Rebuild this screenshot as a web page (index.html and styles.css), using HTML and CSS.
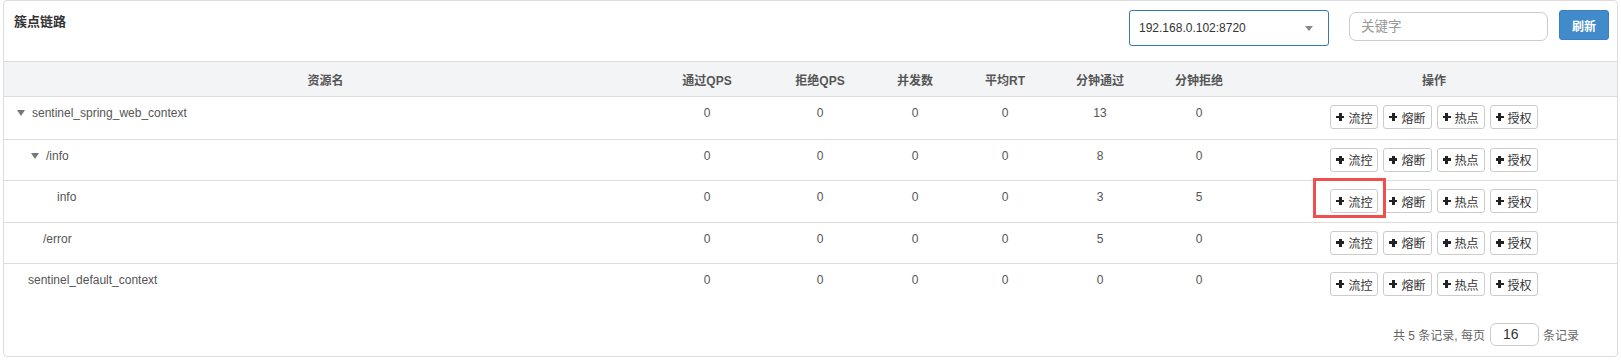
FILE: index.html
```html
<!DOCTYPE html>
<html lang="zh-CN">
<head>
<meta charset="utf-8">
<title>簇点链路</title>
<link rel="stylesheet" href="styles.css">
</head>
<body>
<div class="card">
  <div class="card-head">
    <h3 class="title">簇点链路</h3>
    <div class="tools">
      <div class="select"><span>192.168.0.102:8720</span><i class="caret"></i></div>
      <input class="search" type="text" placeholder="关键字">
      <button class="btn-refresh" type="button">刷新</button>
    </div>
  </div>
  <table class="grid">
    <colgroup>
      <col class="c-name"><col class="c-pass"><col class="c-block"><col class="c-thread"><col class="c-rt"><col class="c-mpass"><col class="c-mblock"><col class="c-ops">
    </colgroup>
    <thead>
      <tr><th>资源名</th><th>通过QPS</th><th>拒绝QPS</th><th>并发数</th><th>平均RT</th><th>分钟通过</th><th>分钟拒绝</th><th>操作</th></tr>
    </thead>
    <tbody>
      <tr>
        <td class="name lvl0"><i class="tri"></i>sentinel_spring_web_context</td>
        <td>0</td><td>0</td><td>0</td><td>0</td><td>13</td><td>0</td>
        <td class="ops"><div class="btns"><button class="btn"><i class="plus"></i>流控</button><button class="btn"><i class="plus"></i>熔断</button><button class="btn"><i class="plus"></i>热点</button><button class="btn"><i class="plus"></i>授权</button></div></td>
      </tr>
      <tr>
        <td class="name lvl1"><i class="tri"></i>/info</td>
        <td>0</td><td>0</td><td>0</td><td>0</td><td>8</td><td>0</td>
        <td class="ops"><div class="btns"><button class="btn"><i class="plus"></i>流控</button><button class="btn"><i class="plus"></i>熔断</button><button class="btn"><i class="plus"></i>热点</button><button class="btn"><i class="plus"></i>授权</button></div></td>
      </tr>
      <tr>
        <td class="name lvl2-leaf">info</td>
        <td>0</td><td>0</td><td>0</td><td>0</td><td>3</td><td>5</td>
        <td class="ops"><div class="btns"><button class="btn"><i class="plus"></i>流控</button><button class="btn"><i class="plus"></i>熔断</button><button class="btn"><i class="plus"></i>热点</button><button class="btn"><i class="plus"></i>授权</button></div></td>
      </tr>
      <tr>
        <td class="name lvl1-leaf">/error</td>
        <td>0</td><td>0</td><td>0</td><td>0</td><td>5</td><td>0</td>
        <td class="ops"><div class="btns"><button class="btn"><i class="plus"></i>流控</button><button class="btn"><i class="plus"></i>熔断</button><button class="btn"><i class="plus"></i>热点</button><button class="btn"><i class="plus"></i>授权</button></div></td>
      </tr>
      <tr>
        <td class="name lvl0-leaf">sentinel_default_context</td>
        <td>0</td><td>0</td><td>0</td><td>0</td><td>0</td><td>0</td>
        <td class="ops"><div class="btns"><button class="btn"><i class="plus"></i>流控</button><button class="btn"><i class="plus"></i>熔断</button><button class="btn"><i class="plus"></i>热点</button><button class="btn"><i class="plus"></i>授权</button></div></td>
      </tr>
    </tbody>
  </table>
  <div class="pager">
    <span>共 5 条记录, 每页</span>
    <input class="page-size" type="text" value="16">
    <span>条记录</span>
  </div>
  <div class="highlight"></div>
</div>
</body>
</html>
```

FILE: styles.css
```css
* { box-sizing: border-box; }
html, body { margin: 0; padding: 0; background: #fff; }
body {
  font-family: "Liberation Sans", Arial, "Noto Sans CJK SC", sans-serif;
  font-size: 12px;
  color: #555;
}
.card {
  position: relative;
  margin: 0 3px;
  height: 357px;
  border: 1px solid #dcdcdc;
  border-radius: 4px;
  background: #fff;
}
.card-head {
  display: flex;
  justify-content: space-between;
  align-items: flex-start;
  height: 60px;
  padding: 9px 8px 0 10px;
}
.title {
  margin: 3px 0 0;
  font-size: 13px;
  line-height: 18px;
  font-weight: bold;
  color: #333;
}
.tools {
  display: flex;
  align-items: flex-start;
}
.select {
  display: flex;
  align-items: center;
  justify-content: space-between;
  width: 200px;
  height: 36px;
  padding: 0 9px 0 9px;
  border: 1px solid #3a77b5;
  border-radius: 3px;
  color: #333;
  font-size: 12px;
}
.caret {
  width: 0;
  height: 0;
  margin-right: 6px;
  border-left: 4px solid transparent;
  border-right: 4px solid transparent;
  border-top: 5px solid #888;
}
.search {
  width: 199px;
  height: 29px;
  margin: 2px 0 0 20px;
  padding: 0 11px;
  border: 1px solid #ccc;
  border-radius: 7px;
  font-family: "Liberation Sans", Arial, "Noto Sans CJK SC", sans-serif;
  font-size: 13.5px;
  color: #333;
  outline: none;
}
.search::placeholder { color: #999; }
.btn-refresh {
  width: 50px;
  height: 30px;
  margin-left: 11px;
  padding: 0;
  border: 1px solid #3a80c2;
  border-radius: 3px;
  background: #428bca;
  color: #fff;
  font-family: "Liberation Sans", Arial, "Noto Sans CJK SC", sans-serif;
  font-size: 12px;
  font-weight: bold;
}
.grid {
  width: 100%;
  border-collapse: separate;
  border-spacing: 0;
  table-layout: fixed;
}
.c-name { width: 643px; }
.c-pass { width: 120px; }
.c-block { width: 106px; }
.c-thread { width: 84px; }
.c-rt { width: 96px; }
.c-mpass { width: 94px; }
.c-mblock { width: 104px; }
.grid thead th {
  height: 36px;
  padding: 0 8px;
  border-top: 1px solid #dcdcdc;
  border-bottom: 1px solid #dcdcdc;
  background: #f3f4f6;
  font-size: 12px;
  font-weight: bold;
  color: #555;
  text-align: center;
  vertical-align: middle;
}
.grid tbody tr { height: 41.5px; }
.grid tbody td {
  padding: 8px;
  line-height: 17px;
  text-align: center;
  vertical-align: top;
  color: #555;
  border-top: 1px solid #dcdcdc;
}
.grid tbody tr:first-child td { border-top: 0; }
.grid tbody td.name { text-align: left; }
.lvl0 { padding-left: 13px !important; }
.lvl1 { padding-left: 27px !important; }
.lvl0-leaf { padding-left: 24px !important; }
.lvl1-leaf { padding-left: 39px !important; }
.lvl2-leaf { padding-left: 53px !important; }
.tri {
  display: inline-block;
  width: 0;
  height: 0;
  margin-right: 7px;
  vertical-align: 1px;
  border-left: 4px solid transparent;
  border-right: 4px solid transparent;
  border-top: 6px solid #777;
}
.grid tbody td.ops { padding-top: 8px; padding-bottom: 0; }
.btns {
  display: inline-flex;
  gap: 5px;
  vertical-align: top;
}
.btn {
  display: inline-flex;
  align-items: center;
  height: 24px;
  padding: 0 5px;
  border: 1px solid #ccc;
  border-radius: 3px;
  background: #fff;
  color: #333;
  font-family: "Liberation Sans", Arial, "Noto Sans CJK SC", sans-serif;
  font-size: 12px;
}
.plus {
  position: relative;
  display: inline-block;
  width: 8px;
  height: 8px;
  margin-right: 4px;
}
.plus::before, .plus::after {
  content: "";
  position: absolute;
  background: #222;
}
.plus::before { left: 0; top: 2.8px; width: 8px; height: 2.6px; }
.plus::after { left: 2.7px; top: 0; width: 2.6px; height: 8px; }
.pager {
  display: flex;
  justify-content: flex-end;
  align-items: center;
  gap: 5px;
  padding: 18px 38px 0 0;
  color: #666;
  font-size: 12px;
}
.page-size {
  width: 49px;
  height: 23px;
  padding: 0 0 0 12px;
  margin-right: -1px;
  border: 1px solid #ccc;
  border-radius: 6px;
  font-family: "Liberation Sans", Arial, sans-serif;
  font-size: 14px;
  color: #333;
  outline: none;
}
.highlight {
  position: absolute;
  left: 1309px;
  top: 177px;
  width: 73px;
  height: 40px;
  border: 3px solid #f14f4f;
  pointer-events: none;
}
```
